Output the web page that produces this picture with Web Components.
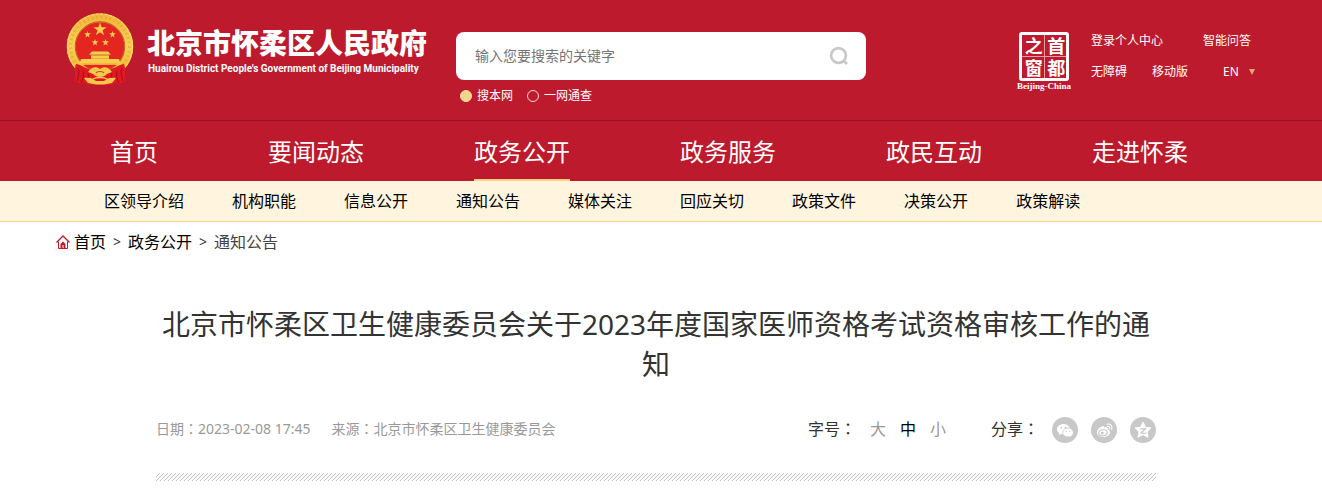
<!DOCTYPE html>
<html lang="zh-CN">
<head>
<meta charset="utf-8">
<meta name="viewport" content="width=device-width, initial-scale=1">
<title>北京市怀柔区人民政府</title>
<style>
body {
  margin: 0;
  background: #fff;
  color: #333;
  font-family: "Noto Sans", "Noto Sans CJK SC", sans-serif;
  font-size: 16px;
  --red: #bd1a2d;
  --gold: #f8d08a;
}
</style>
</head>
<body>

<site-header></site-header>
<main-nav>
  <nav-item>首页</nav-item>
  <nav-item>要闻动态</nav-item>
  <nav-item active>政务公开</nav-item>
  <nav-item>政务服务</nav-item>
  <nav-item>政民互动</nav-item>
  <nav-item>走进怀柔</nav-item>
</main-nav>
<sub-nav>
  <sub-item>区领导介绍</sub-item>
  <sub-item>机构职能</sub-item>
  <sub-item>信息公开</sub-item>
  <sub-item>通知公告</sub-item>
  <sub-item>媒体关注</sub-item>
  <sub-item>回应关切</sub-item>
  <sub-item>政策文件</sub-item>
  <sub-item>决策公开</sub-item>
  <sub-item>政策解读</sub-item>
</sub-nav>
<bread-crumb></bread-crumb>
<news-article>
  <span slot="title">北京市怀柔区卫生健康委员会关于2023年度国家医师资格考试资格审核工作的通知</span>
  <span slot="date">2023-02-08 17:45</span>
  <span slot="source">北京市怀柔区卫生健康委员会</span>
</news-article>

<script>
/**
 * Base class: attaches an open shadow root and fills it with the markup.
 */
class BaseElement extends HTMLElement {
  constructor () {
    super()
    const template = document.createElement('template')
    template.innerHTML = `<style>
:host { display: block; }
* { box-sizing: border-box; }
a { color: inherit; text-decoration: none; }
svg { display: block; }
.inner { max-width: 1200px; margin: 0 auto; }
</style>` + this.constructor.markup
    this.attachShadow({ mode: 'open' })
      .appendChild(template.content.cloneNode(true))
  }
}

/* National emblem */
class SiteEmblem extends BaseElement {
  static markup = `
<svg width="68" height="72" viewBox="0 0 68 72" aria-hidden="true">
  <defs>
    <linearGradient id="rim" x1="0" y1="0" x2="0" y2="1">
      <stop offset="0" stop-color="#f3b93c"/>
      <stop offset=".5" stop-color="#f8cf55"/>
      <stop offset="1" stop-color="#f2b233"/>
    </linearGradient>
    <path id="star" d="M0-6 1.4-1.9 5.7-1.9 2.2.7 3.5 4.9 0 2.3-3.5 4.9-2.2.7-5.7-1.9-1.4-1.9Z"/>
  </defs>
  <circle cx="34" cy="33.500" r="28.800" fill="#e52620" stroke="url(#rim)" stroke-width="9"/>
  <circle cx="34" cy="33.500" r="29.500" fill="none" stroke="#d5922a" stroke-width="3" stroke-dasharray="1.500 3" opacity=".4"/>
  <circle cx="34" cy="33.500" r="32.500" fill="none" stroke="#ffe173" stroke-width="1" stroke-dasharray="3 1.500"/>
  <circle cx="34" cy="33.500" r="24.800" fill="none" stroke="#a7471c" stroke-width=".8"/>
  <g fill="#f6cd4d">
    <use href="#star" transform="translate(34 16.500) scale(1.150)"/>
    <use href="#star" transform="translate(21.500 21.500) scale(.6)"/>
    <use href="#star" transform="translate(46.500 21.500) scale(.6)"/>
    <use href="#star" transform="translate(29 29.500) scale(.6)"/>
    <use href="#star" transform="translate(39.500 29.500) scale(.6)"/>
    <path d="M26 38.500h16l3 3.200h-2v4H25v-4h-2z"/>
    <path d="M15 46h38l1.500 4.500H13.500z"/>
  </g>
  <path d="M24 42h20" stroke="#bb4b1c" stroke-width=".8"/>
  <path d="M12 51h44" stroke="#f6cd4d" stroke-width="1.400"/>
  <path d="M10 51c3 0 7 3 13 5l11 4 11-4c6-2 10-5 13-5 2 6 0 10 2 17l-6 3-5-1-4 2H23l-4-2-5 1-6-3c2-7 0-11 2-17z" fill="#df1822"/>
  <path d="M12 55c2 5 0 10-1 13M17 58c1 4 0 8-2 12M56 55c-2 5 0 10 1 13M51 58c-1 4 0 8 2 12M22 60c1 3 0 5-1 7M46 60c-1 3 0 5 1 7" stroke="#930c18" stroke-width=".8" fill="none"/>
  <path d="M22 59c3-5 8-6 12-3 4-3 9-2 12 3l-5 2c-2 2-4 3-7 3s-5-1-7-3z" fill="#f5c84b"/>
  <path d="M30 60c1-2 7-2 8 0" stroke="#c4471d" stroke-width="1.200" fill="none"/>
  <path d="M18 65c5-1 9 0 12 3h8c3-3 7-4 12-3l-4 5-8 1.500h-8L22 70z" fill="#f5c84b"/>
  <path d="M27 66c3-2 11-2 14 0" stroke="#f5c84b" stroke-width="1.500" fill="none"/>
</svg>`
}

/* Logo with the Chinese and English site names */
class SiteBrand extends BaseElement {
  static markup = `
<style>
a {
  display: flex;
  gap: 13px;
  color: #fff;
  white-space: nowrap;
}
.names { padding-top: 12px; }
.cn { font-size: 28px; line-height: 36px; font-weight: 900; }
.en {
  padding-left: 1px;
  font: bold 10px/16px Roboto, "Liberation Sans", sans-serif;
}
</style>
<a href="#">
  <site-emblem></site-emblem>
  <div class="names">
    <div class="cn">北京市怀柔区人民政府</div>
    <div class="en">Huairou District People's Government of Beijing Municipality</div>
  </div>
</a>`
}

/* Search box and the search scope */
class SiteSearch extends BaseElement {
  static markup = `
<style>
.box {
  display: flex;
  align-items: center;
  height: 48px;
  padding: 0 16px 0 19px;
  border-radius: 8px;
  background: #fff;
}
.box input {
  flex: 1;
  min-width: 0;
  border: 0;
  padding: 0;
  outline: 0;
  background: none;
  font: 14px/20px "Noto Sans", "Noto Sans CJK SC", sans-serif;
}
.box input::placeholder { color: #757575; }
button { border: 0; padding: 0; background: none; cursor: pointer; }
.scope {
  display: flex;
  gap: 14px;
  padding: 8px 4px;
  color: #fff;
  font-size: 12px;
  line-height: 16px;
}
label { display: flex; align-items: center; gap: 5px; }
.scope input {
  appearance: none;
  width: 12px;
  height: 12px;
  margin: 0;
  border: 1px solid #f5d5d9;
  border-radius: 50%;
}
.scope input:checked { background: #f8d48a; border-color: #fbe3b0; }
</style>
<form>
  <div class="box">
    <input type="text" placeholder="输入您要搜索的关键字" aria-label="输入您要搜索的关键字">
    <button type="button" aria-label="搜索">
      <svg width="22" height="22" viewBox="0 0 22 22" fill="none" stroke="#c8c8c8" stroke-width="2.600">
        <circle cx="10.500" cy="10.500" r="7.400"/>
        <path d="M15.500 15.500 19 19"/>
      </svg>
    </button>
  </div>
  <div class="scope">
    <label><input type="radio" name="scope" checked>搜本网</label>
    <label><input type="radio" name="scope">一网通查</label>
  </div>
</form>`
}

/* Seal of the capital's portal */
class CapitalSeal extends BaseElement {
  static markup = `
<style>
a { display: block; width: 54px; color: #fff; text-align: center; }
.seal {
  display: grid;
  writing-mode: vertical-rl;
  grid-template-columns: 1fr 1fr;
  grid-template-rows: 1fr 1fr;
  gap: 1px;
  width: 50px;
  height: 49px;
  margin: 0 auto;
  border: 3px solid #fff;
  border-radius: 3px;
  background: #e3a0a8;
}
.seal span {
  display: flex;
  align-items: center;
  justify-content: center;
  background: var(--red);
  font-size: 18px;
  line-height: 20px;
  font-weight: bold;
}
.en { font: bold 9px/10px "Liberation Serif", serif; white-space: nowrap; }
</style>
<a href="#">
  <div class="seal"><span>首</span><span>都</span><span>之</span><span>窗</span></div>
  <div class="en">Beijing-China</div>
</a>`
}

class SiteTools extends BaseElement {
  static markup = `
<style>
:host { width: 164px; color: #fff; font-size: 12px; line-height: 18px; }
.row { display: flex; }
.row + .row { margin-top: 13px; justify-content: space-between; }
.first { gap: 40px; }
.lang { display: flex; align-items: center; padding-left: 10px; gap: 10px; }
select {
  appearance: none;
  border: 0;
  padding: 0;
  margin: 0;
  background: none;
  color: inherit;
  font: inherit;
}
option { color: #333; }
</style>
<div class="row first"><a href="#">登录个人中心</a><a href="#">智能问答</a></div>
<div class="row">
  <a href="#">无障碍</a>
  <a href="#">移动版</a>
  <label class="lang">
    <select aria-label="Language"><option>EN</option></select>
    <svg width="6" height="6" viewBox="0 0 6 6"><path d="M0 0h6L3 6z" fill="#e3a878"/></svg>
  </label>
</div>`
}

class SiteHeader extends BaseElement {
  static markup = `
<style>
:host { padding-right: 10px; background: var(--red); border-bottom: 1px solid #8f1522; }
.inner {
  display: grid;
  grid-template-columns: 390px minmax(200px, 410px) 1fr auto;
  height: 120px;
  padding: 0 1px 0 10px;
}
site-brand { padding-top: 13px; }
site-search { padding-top: 32px; }
.side { grid-column: 4; display: flex; gap: 20px; padding-top: 32px; }
</style>
<header class="inner">
  <site-brand></site-brand>
  <site-search></site-search>
  <div class="side">
    <capital-seal></capital-seal>
    <site-tools></site-tools>
  </div>
</header>`
}

class NavItem extends BaseElement {
  static markup = `
<style>
a { display: block; height: 60px; line-height: 62px; white-space: nowrap; }
:host([active]) a { border-bottom: 2px solid var(--gold); }
</style>
<a href="#"><slot></slot></a>`
}

class MainNav extends BaseElement {
  static markup = `
<style>
:host { padding-right: 10px; background: var(--red); color: #fff; font-size: 24px; }
nav { display: flex; gap: 110px; padding: 0 54px; }
</style>
<nav class="inner"><slot></slot></nav>`
}

class SubItem extends BaseElement {
  static markup = `
<style>
a { white-space: nowrap; }
</style>
<a href="#"><slot></slot></a>`
}

class SubNav extends BaseElement {
  static markup = `
<style>
:host {
  padding-right: 10px;
  background: #fff5df;
  border-bottom: 1px solid var(--gold);
  color: #000;
  line-height: 40px;
}
nav { display: flex; gap: 48px; padding: 0 48px; }
</style>
<nav class="inner"><slot></slot></nav>`
}

class BreadCrumb extends BaseElement {
  static markup = `
<style>
:host { padding-right: 10px; color: #000; line-height: 40px; }
nav { display: flex; align-items: center; gap: 7px; }
.home { display: flex; align-items: center; gap: 4px; }
.sep { font-size: 14px; color: #333; }
.here { color: #444; }
</style>
<nav class="inner">
  <a class="home" href="#">
    <svg width="14" height="14" viewBox="0 0 14 14" fill="none" stroke="#bd1a2d">
      <path d="M.5 7.500 7 1l6.500 6.500" stroke-width="1.300"/>
      <path d="M2.500 6.500v7h9v-7"/>
      <path d="M4.500 13V9L7 6.500 9.500 9v4H7.500v-3h-1v3z" fill="#bd1a2d" stroke="none"/>
    </svg>
    首页</a>
  <span class="sep">&gt;</span>
  <a href="#">政务公开</a>
  <span class="sep">&gt;</span>
  <span class="here">通知公告</span>
</nav>`
}

/* Round share buttons */
class ShareBar extends BaseElement {
  static markup = `
<style>
:host { display: flex; gap: 13px; }
button {
  width: 26px;
  height: 26px;
  border: 0;
  padding: 0;
  border-radius: 50%;
  background: #c8c8c8;
  cursor: pointer;
}
</style>
<button type="button" aria-label="微信">
  <svg width="26" height="26" viewBox="0 0 26 26">
    <path d="M11.500 7C8 7 5 9.300 5 12.300c0 1.600.9 3 2.200 4l-.6 2 2.400-1.200c.8.200 1.600.3 2.500.3C15 17.400 18 15.200 18 12.300 18 9.300 15 7 11.500 7z" fill="#fff"/>
    <path d="M16 11c-3 0-5.300 2-5.300 4.500S13 20 16 20c.7 0 1.300-.1 1.900-.3l2 1-.5-1.700c1.200-.8 2-2.100 2-3.500C21.400 13 19 11 16 11z" fill="#fff" stroke="#c8c8c8" stroke-width=".8"/>
    <g fill="#c8c8c8"><circle cx="9.300" cy="10.700" r=".9"/><circle cx="13.500" cy="10.700" r=".9"/><circle cx="14.300" cy="14.200" r=".7"/><circle cx="17.800" cy="14.200" r=".7"/></g>
  </svg>
</button>
<button type="button" aria-label="微博">
  <svg width="26" height="26" viewBox="0 0 26 26">
    <path d="M12.500 9c-2.500 0-6.500 3.400-6.500 6.500 0 2.700 2.700 4.500 6 4.500 4 0 7-2.200 7-4.600 0-1.500-1-2.300-2.300-2.600.4-1.300 0-2.200-1-2.400-.8-.2-1.700 0-2.500.3C13.600 9.700 13.300 9 12.500 9z" fill="#fff"/>
    <ellipse cx="12" cy="15.800" rx="4.300" ry="3" fill="#fff" stroke="#c8c8c8" stroke-width="1.100" transform="rotate(-8 12 15.800)"/>
    <circle cx="11.300" cy="16" r="1.500" fill="#c8c8c8"/>
    <path d="M16 7.200c3.300-.9 5.800 1.800 4.700 5.200M16.300 9.500c1.600-.4 2.700.8 2.200 2.400" fill="none" stroke="#fff" stroke-width="1.100" stroke-linecap="round"/>
  </svg>
</button>
<button type="button" aria-label="QQ空间">
  <svg width="26" height="26" viewBox="0 0 26 26">
    <path d="M13 5 15.500 10.300l5.500.7-4 3.800 1.100 5.500L13 17.600 7.900 20.300 9 14.800 5 11l5.500-.7z" fill="#fff" stroke="#fff" stroke-linejoin="round"/>
    <path d="M10 11.800h5.500L11 16c1.500.4 3.500.4 5.500 0" fill="none" stroke="#c8c8c8" stroke-width="1.200"/>
  </svg>
</button>`
}

class NewsArticle extends BaseElement {
  static markup = `
<style>
:host { padding-right: 10px; }
article { max-width: 1000px; margin: 0 auto; padding-top: 42px; }
h1 {
  margin: 0;
  font-size: 28px;
  line-height: 40px;
  font-weight: normal;
  text-align: center;
}
.meta { display: flex; align-items: flex-start; height: 26px; margin-top: 33px; line-height: 24px; }
.info { display: flex; gap: 21px; color: #999; font-size: 14px; }
.size { display: flex; gap: 14px; margin-left: auto; }
.size button {
  border: 0;
  padding: 0;
  background: none;
  color: #999;
  font: inherit;
  cursor: pointer;
}
.size .on { color: #000; }
/* the TC face centres the full-width colon */
.colon { font-family: "Noto Sans CJK TC", sans-serif; line-height: 1; }
.share { display: flex; gap: 13px; margin-left: 45px; }
.rule {
  height: 8px;
  margin: 30px 0;
  border: 0;
  background: linear-gradient(135deg, #d0d0d0, #fff 25%, #d0d0d0 50%, #fff 75%, #d0d0d0) 0 0 / 8px 8px;
  background: linear-gradient(135deg, #eee 12%, #fff 13% 37%, #c4c4c4 50%, #fff 63% 87%, #eee 88%) 0 0 / 4px 4px;
}
</style>
<article>
  <h1><slot name="title"></slot></h1>
  <div class="meta">
    <div class="info">
      <span>日期<span class="colon" lang="zh-TW">：</span><slot name="date"></slot></span>
      <span>来源<span class="colon" lang="zh-TW">：</span><slot name="source"></slot></span>
    </div>
    <div class="size">
      <span>字号<span class="colon" lang="zh-TW">：</span></span>
      <button type="button">大</button>
      <button type="button" class="on">中</button>
      <button type="button">小</button>
    </div>
    <div class="share"><span>分享<span class="colon" lang="zh-TW">：</span></span><share-bar></share-bar></div>
  </div>
  <hr class="rule">
</article>`
}

customElements.define('site-emblem', SiteEmblem)
customElements.define('site-brand', SiteBrand)
customElements.define('site-search', SiteSearch)
customElements.define('capital-seal', CapitalSeal)
customElements.define('site-tools', SiteTools)
customElements.define('site-header', SiteHeader)
customElements.define('nav-item', NavItem)
customElements.define('main-nav', MainNav)
customElements.define('sub-item', SubItem)
customElements.define('sub-nav', SubNav)
customElements.define('bread-crumb', BreadCrumb)
customElements.define('share-bar', ShareBar)
customElements.define('news-article', NewsArticle)
</script>
</body>
</html>
